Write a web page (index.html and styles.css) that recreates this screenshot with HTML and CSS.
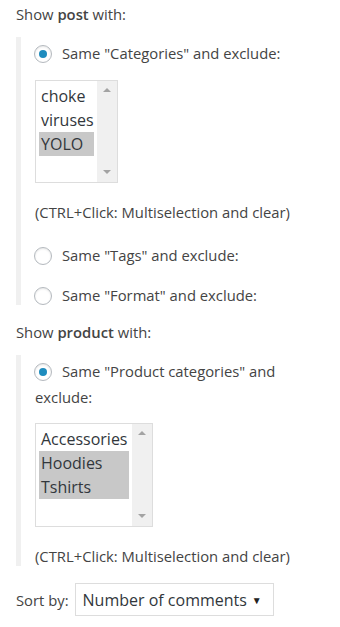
FILE: index.html
```html
<!DOCTYPE html>
<html lang="en">
<head>
    <meta charset="UTF-8">
    <meta name="viewport" content="width=device-width, initial-scale=1.0">
    <title>Related posts settings</title>
    <link rel="stylesheet" href="styles.css">
</head>
<body>
    <div class="panel">
        <p class="heading">Show <b>post</b> with:</p>
        <div class="group">
            <label class="choice first">
                <span class="radio checked"></span>Same "Categories" and exclude:
            </label>
            <div class="listbox small">
                <ul class="options">
                    <li>choke</li>
                    <li>viruses</li>
                    <li class="selected">YOLO</li>
                </ul>
                <div class="scrollbar"><span class="arrow up"></span><span class="arrow down"></span></div>
            </div>
            <p class="hint">(CTRL+Click: Multiselection and clear)</p>
            <label class="choice tags">
                <span class="radio"></span>Same "Tags" and exclude:
            </label>
            <label class="choice format">
                <span class="radio"></span>Same "Format" and exclude:
            </label>
        </div>

        <p class="heading second">Show <b>product</b> with:</p>
        <div class="group">
            <label class="choice first wrap">
                <span class="radio checked"></span>Same "Product categories" and exclude:
            </label>
            <div class="listbox wide">
                <ul class="options">
                    <li>Accessories</li>
                    <li class="selected">Hoodies</li>
                    <li class="selected">Tshirts</li>
                </ul>
                <div class="scrollbar"><span class="arrow up"></span><span class="arrow down"></span></div>
            </div>
            <p class="hint">(CTRL+Click: Multiselection and clear)</p>
        </div>

        <div class="sort">
            <span class="sort-label">Sort by:</span>
            <div class="dropdown">Number of comments<span class="caret">&#9660;</span></div>
        </div>
    </div>
</body>
</html>
```

FILE: styles.css
```css
body {
    margin: 0;
    font-family: "Open Sans", "Noto Sans", sans-serif;
    font-size: 14.8px;
    color: #444;
    background: #fff;
}
.panel {
    width: 300px;
    padding: 4px 0 0 16px;
}
.heading {
    margin: 0;
    line-height: 20px;
}
.heading.second {
    margin-top: 17px;
}
.heading b {
    font-weight: 600;
}
.group {
    margin-top: 13px;
    border-left: 5px solid #f0f0f0;
    padding: 6px 0 0 14px;
}
.choice {
    display: block;
    line-height: 20px;
}
.choice.wrap {
    line-height: 26px;
    margin-top: -3px;
}
.choice.tags {
    margin-top: 23px;
}
.choice.format {
    margin-top: 20px;
}
.radio {
    display: inline-block;
    vertical-align: middle;
    position: relative;
    width: 16px;
    height: 16px;
    margin: -3px 10px 0 -1px;
    border: 1px solid #b4b9be;
    border-radius: 50%;
    box-shadow: inset 0 1px 2px rgba(0, 0, 0, 0.1);
    background: #fff;
}
.radio.checked::after {
    content: "";
    position: absolute;
    left: 4px;
    top: 4px;
    width: 8px;
    height: 8px;
    border-radius: 50%;
    background: #1e8cbe;
}
.listbox {
    display: flex;
    margin-top: 17px;
    height: 101px;
    border: 1px solid #ddd;
    background: #fff;
}
.listbox.small {
    width: 81px;
}
.listbox.wide {
    width: 116px;
    height: 102px;
    margin-top: 13px;
}
.options {
    flex: 1;
    list-style: none;
    margin: 0;
    padding: 3px;
    font-size: 16px;
    color: #32373c;
}
.options li {
    height: 24px;
    line-height: 24px;
    padding-left: 2px;
    white-space: nowrap;
}
.options li.selected {
    background: #c8c8c8;
}
.scrollbar {
    width: 20px;
    background: #f0f0f0;
    display: flex;
    flex-direction: column;
    justify-content: space-between;
    align-items: center;
    padding: 7px 0 8px;
}
.arrow {
    width: 0;
    height: 0;
    border-left: 4px solid transparent;
    border-right: 4px solid transparent;
}
.arrow.up {
    border-bottom: 4px solid #a3a3a3;
}
.arrow.down {
    border-top: 4px solid #a3a3a3;
}
.hint {
    margin: 19px 0 0;
    line-height: 20px;
}
.group:last-of-type .hint {
    margin-top: 22px;
}
.sort {
    display: flex;
    align-items: center;
    margin-top: 17px;
}
.sort-label {
    margin-right: 6px;
}
.dropdown {
    display: flex;
    align-items: center;
    justify-content: space-between;
    width: 179px;
    height: 31px;
    padding: 0 11px 0 7px;
    border: 1px solid #ddd;
    font-size: 16px;
    color: #32373c;
}
.caret {
    font-size: 10px;
    color: #222;
}
```
